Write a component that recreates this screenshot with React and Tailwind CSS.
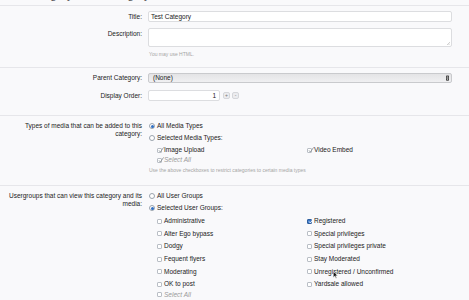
import React from "react";

const leftGroups = [
  { label: "Administrative" },
  { label: "Alter Ego bypass" },
  { label: "Dodgy" },
  { label: "Fequent flyers" },
  { label: "Moderating" },
  { label: "OK to post" },
];

const rightGroups = [
  { label: "Registered", checked: true },
  { label: "Special privileges" },
  { label: "Special privileges private" },
  { label: "Stay Moderated" },
  { label: "Unregistered / Unconfirmed" },
  { label: "Yardsale allowed" },
];

function Radio({ checked, label }) {
  return (
    <label className="flex items-center h-[12px] pl-[1px]">
      <span className="w-[6px] h-[6px] rounded-full border border-[#9aa3ad] bg-white flex items-center justify-center shrink-0">
        {checked && <span className="w-[3px] h-[3px] rounded-full bg-[#2f6fc4]" />}
      </span>
      <span className="ml-[2px] text-[#222]">{label}</span>
    </label>
  );
}

function Check({ checked, disabled, italic, label, className = "" }) {
  return (
    <label className={`flex items-center ${className}`}>
      <span
        className={`relative w-[5px] h-[5px] rounded-[1px] border shrink-0 ${
          checked && !disabled
            ? "border-[#2f5f9e] bg-[#3b78c9]"
            : "border-[#b9bec5] bg-white"
        }`}
      >
        {checked && (
          <svg
            viewBox="0 0 6 6"
            className="absolute left-[-0.5px] top-[-1.5px] w-[6px] h-[6px] overflow-visible"
          >
            <path
              d="M1 3.4 L2.4 5 L5.6 0.4"
              fill="none"
              stroke={disabled ? "#8f959c" : "#ffffff"}
              strokeWidth="0.9"
            />
          </svg>
        )}
      </span>
      <span
        className={`ml-[2px] ${italic ? "italic text-[#9a9a9a]" : "text-[#222]"}`}
      >
        {label}
      </span>
    </label>
  );
}

function Row({ label, children, className = "", labelClass = "" }) {
  return (
    <div className={`flex ${className}`}>
      <div className={`w-[142px] shrink-0 text-right text-[#222] ${labelClass}`}>{label}</div>
      <div className="ml-[6px] flex-1 mr-[17px]">{children}</div>
    </div>
  );
}

export default function App() {
  return (
    <div className="relative h-[300px] overflow-hidden bg-[#f9f9fb] font-['Liberation_Sans',Arial,sans-serif] text-[6.5px] leading-[8px]">
      {/* Page heading, scrolled mostly out of view */}
      <div className="h-[6px] overflow-hidden border-b border-[#e6e6ea]">
        <h1 className="text-[11.5px] leading-[12px] -mt-[11px] pl-[3px] text-[#555]">
          Edit Category: Test Category
        </h1>
      </div>

      {/* Title */}
      <Row label="Title:" className="mt-[5px] items-center h-[11px]">
        <div className="h-[11px] border border-[#dcdde0] rounded-[2px] bg-white flex items-center px-[2px] text-[#222]">
          Test Category
        </div>
      </Row>

      {/* Description */}
      <Row label="Description:" className="mt-[6px]" labelClass="pt-[2px]">
        <div className="relative h-[19px] border border-[#dcdde0] rounded-[2px] bg-white">
          <svg viewBox="0 0 4 4" className="absolute right-[1px] bottom-[1px] w-[3px] h-[3px]">
            <path d="M4 0 L0 4 M4 2 L2 4" stroke="#999" strokeWidth="0.6" />
          </svg>
        </div>
        <div className="mt-[4px] text-[5px] leading-[6px] text-[#a5a5a5] pl-[1px]">You may use HTML.</div>
      </Row>

      <div className="mt-[10px] border-t border-[#e6e6ea]" />

      {/* Parent category */}
      <Row label="Parent Category:" className="mt-[5px] items-center h-[10px]">
        <div className="h-[10px] border border-[#c9cacd] rounded-[2px] bg-gradient-to-b from-[#e4e4e6] to-[#f0f0f2] flex items-center justify-between pl-[4px] pr-[2px] text-[#222]">
          <span>(None)</span>
          <svg viewBox="0 0 4 7" className="w-[3px] h-[6px]">
            <rect x="0" y="0" width="4" height="7" rx="1" fill="#444" />
            <path d="M2 1 L3.2 2.8 L0.8 2.8 Z M2 6 L3.2 4.2 L0.8 4.2 Z" fill="#eee" />
          </svg>
        </div>
      </Row>

      {/* Display order */}
      <Row label="Display Order:" className="mt-[7px] items-center h-[11px]">
        <div className="flex items-center">
          <div className="w-[72px] h-[11px] border border-[#dcdde0] rounded-[2px] bg-white flex items-center justify-end pr-[3px] text-[#222]">
            1
          </div>
          <button className="ml-[3px] w-[7px] h-[7px] rounded-[2px] border border-[#d5d6da] bg-[#ececef] text-[5px] leading-[5px] text-[#777] flex items-center justify-center">
            +
          </button>
          <button className="ml-[2px] w-[7px] h-[7px] rounded-[2px] border border-[#d5d6da] bg-[#ececef] text-[5px] leading-[5px] text-[#777] flex items-center justify-center">
            -
          </button>
        </div>
      </Row>

      <div className="mt-[14px] border-t border-[#e6e6ea]" />

      {/* Media types */}
      <Row
        label={<>Types of media that can be added to this<br />category:</>}
        className="mt-[4px]"
        labelClass="pt-[2px]"
      >
        <Radio checked label="All Media Types" />
        <Radio label="Selected Media Types:" />
        <div className="pl-[9px] mt-[1px]">
          <div className="grid grid-cols-[150px_1fr] h-[10px] items-center">
            <Check checked disabled label="Image Upload" />
            <Check checked disabled label="Video Embed" />
          </div>
          <Check checked disabled italic label="Select All" className="h-[10px]" />
        </div>
        <div className="h-[10px] flex items-center text-[5px] leading-[6px] text-[#a5a5a5] pl-[1px]">
          Use the above checkboxes to restrict categories to certain media types
        </div>
      </Row>

      <div className="mt-[10px] border-t border-[#e6e6ea]" />

      {/* User groups */}
      <Row
        label={<>Usergroups that can view this category and its<br />media:</>}
        className="mt-[4px]"
        labelClass="pt-[2px]"
      >
        <Radio label="All User Groups" />
        <Radio checked label="Selected User Groups:" />
        <div className="pl-[9px] mt-[1px] grid grid-cols-[150px_1fr]">
          <div>
            {leftGroups.map((g) => (
              <Check key={g.label} label={g.label} className="h-[12.6px]" />
            ))}
            <Check italic label="Select All" className="h-[8px]" />
          </div>
          <div>
            {rightGroups.map((g) => (
              <Check key={g.label} checked={g.checked} label={g.label} className="h-[12.6px]" />
            ))}
          </div>
        </div>
      </Row>

      {/* Mouse pointer */}
      <svg viewBox="0 0 8 12" className="absolute left-[333px] top-[271px] w-[5px] h-[8px]">
        <path d="M0.5 0.5 L0.5 10 L3 7.6 L4.6 11.2 L6 10.6 L4.4 7.1 L7.5 7.1 Z" fill="#111" stroke="#fff" strokeWidth="0.8" />
      </svg>
    </div>
  );
}
